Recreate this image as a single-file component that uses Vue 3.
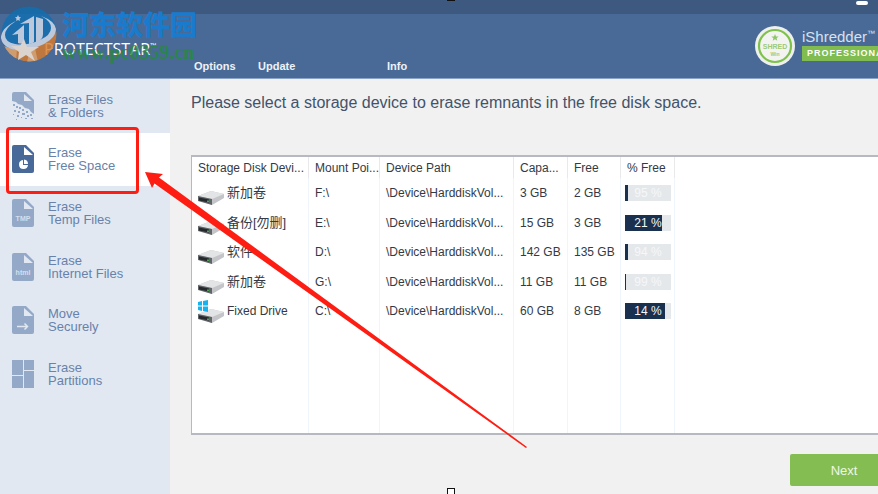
<script setup>
import { ref } from 'vue';

const active = ref('free');

const menu = [
  { id: 'files', icon: 'files', lines: ['Erase Files', '& Folders'] },
  { id: 'free', icon: 'pie', lines: ['Erase', 'Free Space'] },
  { id: 'temp', icon: 'text', label: 'TMP', lines: ['Erase', 'Temp Files'] },
  { id: 'internet', icon: 'text', label: 'html', lines: ['Erase', 'Internet Files'] },
  { id: 'move', icon: 'arrow', lines: ['Move', 'Securely'] },
  { id: 'partitions', icon: 'grid', lines: ['Erase', 'Partitions'] },
];

const path = '\\Device\\HarddiskVol...';

const drives = [
  { name: '新加卷', mount: 'F:\\', capacity: '3 GB', free: '2 GB', percent: 95, bar: 7 },
  { name: '备份[勿删]', mount: 'E:\\', capacity: '15 GB', free: '3 GB', percent: 21, bar: 80 },
  { name: '软件', mount: 'D:\\', capacity: '142 GB', free: '135 GB', percent: 94, bar: 7 },
  { name: '新加卷', mount: 'G:\\', capacity: '11 GB', free: '11 GB', percent: 99, bar: 2 },
  { name: 'Fixed Drive', mount: 'C:\\', capacity: '60 GB', free: '8 GB', percent: 14, bar: 86, system: true },
];
</script>

<template>
  <div class="window">
    <div class="titlebar">
      <button class="minimize" aria-label="Minimize"></button>
    </div>
    <header class="header">
      <div class="brand">PROTECTSTAR<sup>™</sup></div>
      <nav class="topnav">
        <a href="#">Options</a>
        <a href="#">Update</a>
        <a href="#">Info</a>
      </nav>
      <div class="product">
        <svg class="seal" viewBox="0 0 42 42">
          <circle cx="21" cy="21" r="20" fill="#eef0ee" />
          <circle cx="21" cy="21" r="16" fill="#f3f4f2" stroke="#7fc24b" stroke-width="2.2" />
          <path d="M21 9l1 2.4 2.6.1-2 1.7.7 2.6-2.3-1.5-2.3 1.5.7-2.6-2-1.7 2.6-.1z" fill="#8cc665" />
          <text x="21" y="23.500" text-anchor="middle" font-size="7" font-weight="bold" fill="#9bca78">SHRED</text>
          <text x="21" y="31" text-anchor="middle" font-size="5" font-weight="bold" fill="#9bca78">Win</text>
        </svg>
        <div class="product-text">
          <div class="product-name">iShredder<sup>™</sup> Windows</div>
          <div class="edition">PROFESSIONAL</div>
        </div>
      </div>
    </header>

    <div class="body">
      <aside class="sidebar">
        <ul class="menu">
          <li v-for="item in menu" :key="item.id">
            <button class="menu-item" :class="{ active: active === item.id }" @click="active = item.id">
              <svg class="menu-icon" viewBox="0 0 22 28">
                <g v-if="item.icon === 'grid'" fill="currentColor">
                  <rect x="0" y="0" width="11" height="15" />
                  <rect x="12" y="0" width="10" height="10" />
                  <rect x="0" y="16" width="11" height="12" />
                  <rect x="12" y="11" width="10" height="17" />
                </g>
                <g v-else-if="item.icon === 'files'" fill="currentColor">
                  <path d="M2 0h12l8 8v14l-3-2-2-3-4-1-3-3-4-1-2-2-4-1V2q0-2 2-2z" />
                  <path class="fold" d="M12 2v7h8z" />
                  <path d="M1 12h2v2H1zM4 14h2v2H4zM2 18h2v2H2zM7 15h2v2H7zM6 19h2v2H6zM10 17h2v2h-2zM10 21h3v2h-3zM14 19h2v2h-2zM15 23h2v2h-2zM18 22h2v2h-2zM5 23h2v2H5zM1 22h1v1H1zM9 25h1v1H9zM13 26h2v1h-2zM19 26h2v1h-2zM4 27h1v1H4z" />
                </g>
                <g v-else>
                  <path d="M2 0h12l8 8v18q0 2-2 2H2q-2 0-2-2V2q0-2 2-2z" fill="currentColor" />
                  <path class="fold" d="M12 2v8h9z" />
                  <template v-if="item.icon === 'pie'">
                    <path class="fold" d="M11 15v5h5a4.500 4.500 0 1 1-5-5z" />
                    <path class="fold" d="M12 14.500a4.500 4.500 0 0 1 4 4.500h-4z" />
                  </template>
                  <path v-else-if="item.icon === 'arrow'" d="M5 20.500h10M12.500 17.500l3 3-3 3" fill="none" stroke="#e1e8f2" stroke-width="1.500" />
                  <text v-else x="11" y="22" text-anchor="middle" font-size="7" font-weight="bold" fill="#d5dfec">{{ item.label }}</text>
                </g>
              </svg>
              <span>{{ item.lines[0] }}<br />{{ item.lines[1] }}</span>
            </button>
          </li>
        </ul>
      </aside>

      <main class="content">
        <h1>Please select a storage device to erase remnants in the free disk space.</h1>
        <div class="list">
          <table>
            <colgroup>
              <col class="c-name" />
              <col class="c-mount" />
              <col class="c-path" />
              <col class="c-size" />
              <col class="c-free" />
              <col class="c-percent" />
              <col />
            </colgroup>
            <thead>
              <tr>
                <th>Storage Disk Devi...</th>
                <th>Mount Poi...</th>
                <th>Device Path</th>
                <th>Capa...</th>
                <th>Free</th>
                <th>% Free</th>
                <td></td>
              </tr>
            </thead>
            <tbody>
              <tr v-for="d in drives" :key="d.mount">
                <td>
                  <div class="drive">
                    <svg class="drive-icon" viewBox="0 0 26 24">
                      <path d="M0 15L13 10l13 3v4l-12 7L0 19z" fill="#c3c5c8" />
                      <path d="M0 15L13 10l13 3-12 5z" fill="#e3e4e6" />
                      <path d="M0 15l14 3v6L0 20z" fill="#606468" />
                      <path d="M1 16.500l10 2v3l-10-2z" fill="#25292b" />
                      <path d="M9 19.500h2v1.500H9z" fill="#49a84e" />
                      <path v-if="d.system" d="M0 3l4-1v4.500H0zM5 2l5-1v5.500H5zM0 7.500h4V12l-4-1zM5 7.500h5V13l-5-1z" fill="#16b4ee" />
                    </svg>
                    <span :class="{ cjk: !d.system }">{{ d.name }}</span>
                  </div>
                </td>
                <td>{{ d.mount }}</td>
                <td>{{ path }}</td>
                <td>{{ d.capacity }}</td>
                <td>{{ d.free }}</td>
                <td class="percent">
                  <div class="bar">
                    <div class="bar-fill" :style="{ width: d.bar + '%' }"></div>
                    <span>{{ d.percent }} %</span>
                  </div>
                </td>
                <td></td>
              </tr>
              <tr class="rest" aria-hidden="true">
                <td v-for="n in 7" :key="n"></td>
              </tr>
            </tbody>
          </table>
        </div>
        <div class="footer">
          <button class="next">Next</button>
        </div>
      </main>
    </div>

    <!-- watermark -->
    <div class="watermark">
      <svg class="mark" viewBox="0 0 56 56">
        <defs>
          <clipPath id="disc"><circle cx="28" cy="28" r="27.500" /></clipPath>
        </defs>
        <g clip-path="url(#disc)">
          <rect width="56" height="56" fill="#126fb0" />
          <path d="M2 40q14 6 27 2 18-5 27-17v31H0z" fill="#d87c2c" />
          <path d="M3 40q6 3 13 3l-1 13L4 46zM29 43l5-1 3 14H26z" fill="#eda767" />
        </g>
        <g fill="#d6deec">
          <path d="M11 29l12-10v18q-3 1-6 0V28z" />
          <path d="M19 18l14-8v26q-2 2-5 2V17z" />
          <path d="M35 11l7 2v15q0 6-7 9z" />
          <path d="M15 15Q0 22 0 32q2 11 17 12 20 0 32-10 6-5 6-11-1-8-15-13 10 5 10 12 0 7-11 12-13 6-25 4Q4 36 4 29q0-7 11-14z" />
        </g>
        <path d="M17 9l1 2 2 .3-1.500 1.500.4 2.200-1.900-1-1.900 1 .4-2.200L14 11.300l2-.3z" fill="#d2dceb" />
        <path d="M23 33l3 8 12 0-8 5 4 9-9-6-8 5 1-8-8-6 9 0z" fill="#fbeadb" />
      </svg>
      <div class="mark-text">
        <div class="mark-name">河东软件园</div>
        <div class="mark-url">www.pc0359.cn</div>
      </div>
    </div>

    <!-- annotations -->
    <div class="red-box"></div>
    <svg class="red-arrow" viewBox="0 0 382 276">
      <path d="M0 0l18 2-4 3.500L382 275l-1 1L9.500 11.500 7 16z" fill="#fe1d12" />
    </svg>
    <div class="handle top"></div>
    <div class="handle bottom"></div>
  </div>
</template>

<style>
body {
  margin: 0;
  overflow: hidden;
}
</style>

<style scoped>
.window {
  position: relative;
  display: flex;
  flex-direction: column;
  min-height: 100vh;
  overflow: hidden;
  background: #f1f1f1;
  font-family: "Liberation Sans", "Noto Sans CJK SC", sans-serif;
}

button {
  border: 0;
  padding: 0;
  background: none;
  font-family: inherit;
  cursor: pointer;
}

.titlebar {
  display: flex;
  justify-content: flex-end;
  height: 14px;
  background: #3e597f;
}

.minimize {
  width: 12px;
  height: 4px;
  margin: 1px 10px 0 0;
  border-radius: 2px;
  background: #fff;
}

.header {
  display: flex;
  height: 64px;
  background: #496a97;
  border-bottom: 1px solid #8aa3c6;
  color: #fff;
}

.brand {
  width: 150px;
  padding: 23px 0 0 44px;
  font: 500 16px/24px "Open Sans", sans-serif;
}

.brand sup {
  font-size: 8px;
  line-height: 8px;
}

.topnav {
  display: grid;
  grid-template-columns: 64px 129px auto;
  align-content: end;
  padding-bottom: 4px;
}

.topnav a {
  color: #edf2f9;
  font-size: 11px;
  line-height: 16px;
  font-weight: bold;
  text-decoration: none;
}

.product {
  display: flex;
  gap: 6px;
  width: 124px;
  margin-left: auto;
  padding-top: 11px;
  overflow: hidden;
}

.seal {
  flex: none;
  width: 42px;
  height: 42px;
}

.product-text {
  flex: none;
  padding-top: 3px;
  white-space: nowrap;
}

.product-name {
  color: #d7e1ef;
  font-size: 15px;
  line-height: 18px;
}

.product-name sup {
  font-size: 8px;
  line-height: 8px;
}

.edition {
  padding: 0 5px;
  background: #80bc4f;
  font-size: 9px;
  line-height: 15px;
  font-weight: bold;
  letter-spacing: 1px;
}

.body {
  display: flex;
  flex: 1;
}

.sidebar {
  flex: none;
  width: 170px;
  background: #e1e8f2;
}

.menu {
  display: grid;
  grid-template-rows: repeat(6, 1fr);
  height: 322px;
  margin: 0;
  padding: 0;
  list-style: none;
}

.menu-item {
  display: flex;
  align-items: center;
  gap: 14px;
  width: 100%;
  height: 100%;
  padding-left: 12px;
  color: #94a9c8;
  text-align: left;
}

.menu-item span {
  color: #6882aa;
  font-size: 13px;
  line-height: 13px;
}

.menu-item.active {
  background: #fff;
  color: #496a99;
}

.menu-icon {
  width: 22px;
  height: 28px;
}

.fold {
  fill: #e1e8f2;
}

.active .fold {
  fill: #fff;
}

.content {
  display: flex;
  flex: 1;
  flex-direction: column;
  min-width: 0;
  padding-left: 21px;
}

h1 {
  margin: 14px 0 42px;
  color: #42536b;
  font-size: 16px;
  line-height: 20px;
  font-weight: normal;
}

.list {
  display: flex;
  flex: 1;
  border: solid #b6b9c0;
  border-width: 2px 0 2px 1px;
  background: #fff;
}

table {
  width: 100%;
  table-layout: fixed;
  border-collapse: separate;
  border-spacing: 0;
  color: #333a45;
  font-size: 12px;
}

.c-name {
  width: 117px;
}

.c-mount {
  width: 71px;
}

.c-path {
  width: 134px;
}

.c-size,
.c-percent {
  width: 54px;
}

.c-free {
  width: 53px;
}

th,
td {
  height: 30px;
  padding: 0 0 0 6px;
  box-sizing: border-box;
  border-right: 1px solid #f0f5fb;
  font-weight: normal;
  text-align: left;
  white-space: nowrap;
}

tr:nth-child(even) td {
  height: 29px;
}

th {
  border-right-color: #e9e9eb;
}

thead th,
thead td {
  height: 21px;
}

td:last-child {
  border-right: 0;
}

tr.rest td {
  height: auto;
}

.drive {
  display: flex;
  align-items: center;
  gap: 3px;
}

.drive-icon {
  flex: none;
  width: 26px;
  height: 24px;
}

.cjk {
  font-size: 13px;
  line-height: 18px;
}

.percent {
  padding-left: 4px;
}

.bar {
  position: relative;
  width: 46px;
  height: 16px;
  background: #e5e8eb;
  color: #f5f7f9;
  line-height: 16px;
  text-align: center;
}

.bar-fill {
  position: absolute;
  inset: 0 auto 0 0;
  background: #19304f;
}

.bar span {
  position: relative;
}

.footer {
  display: flex;
  justify-content: flex-end;
  padding: 19px 0 8px;
}

.next {
  width: 88px;
  height: 32px;
  padding-left: 20px;
  border-radius: 2px 0 0 2px;
  background: #84bd52;
  color: #eef7e5;
  font-size: 13px;
}

.watermark {
  position: absolute;
  top: 6px;
  left: 1px;
  display: flex;
  gap: 5px;
}

.mark {
  width: 56px;
  height: 56px;
  opacity: 0.82;
}

.mark-name {
  color: #197bcd;
  font: 900 27px/36px "Noto Sans CJK SC", sans-serif;
}

.mark-url {
  color: #268a3c;
  font: bold 20px/20px "Liberation Serif", serif;
  opacity: 0.8;
}

.red-box {
  position: absolute;
  top: 127px;
  left: 6px;
  width: 127px;
  height: 61px;
  border: 3px solid #fe1d12;
  border-radius: 4px;
}

.red-arrow {
  position: absolute;
  top: 172px;
  left: 145px;
  width: 382px;
  height: 276px;
  pointer-events: none;
}

.handle {
  position: absolute;
  left: 447px;
  width: 6px;
  height: 6px;
  border: 1px solid #111;
  background: #fff;
}

.handle.top {
  top: -7px;
}

.handle.bottom {
  bottom: -2px;
}
</style>
